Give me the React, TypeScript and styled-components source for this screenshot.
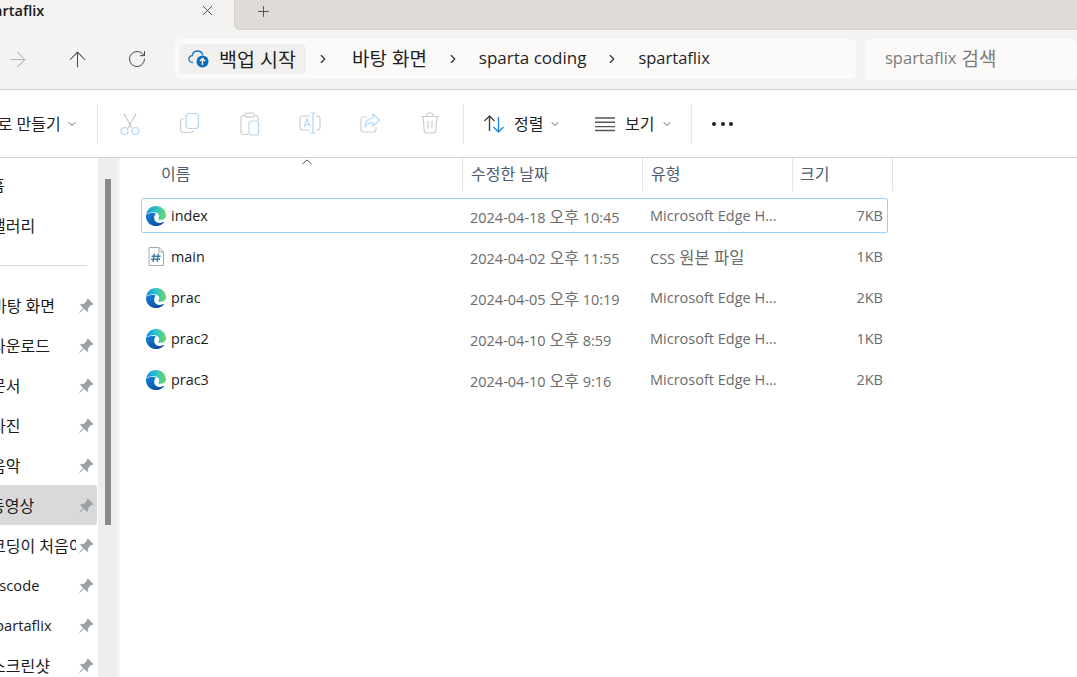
import styled, { createGlobalStyle } from 'styled-components'
import { ArrowRight, ArrowUp, ChevronDown, ChevronRight, Plus, RotateCw, X } from 'lucide-react'
import { BsPinAngleFill } from 'react-icons/bs'

const GlobalStyle = createGlobalStyle`
  html, body {
    margin: 0;
    padding: 0;
    height: 100%;
    overflow: hidden;
    background: #fff;
  }
  body {
    font-family: "Open Sans", "Noto Sans CJK KR", sans-serif;
  }
  * {
    box-sizing: border-box;
  }
`

const Window = styled.div`
  width: 100vw;
  height: 100vh;
  display: flex;
  flex-direction: column;
  overflow: hidden;
`

const TabStrip = styled.div`
  height: 30px;
  flex: none;
  display: flex;
  background: #f3f2f0;
`

const Tab = styled.div`
  width: 234px;
  display: flex;
  align-items: center;
  justify-content: space-between;
  padding-right: 18px;
  padding-bottom: 10px;
  color: #1a1a1a;
  font-size: 14.5px;
  font-weight: 600;
`

const TabTitle = styled.span`
  margin-left: -22px;
`

const TabRest = styled.div`
  flex: 1;
  display: flex;
  align-items: center;
  padding: 0 0 6px 20px;
  background: #dedbd6;
  border-left: 1px solid #d4d2cd;
  border-bottom: 1px solid #d4d2cd;
  border-bottom-left-radius: 6px;
  color: #555;
`

const AddressBar = styled.div`
  height: 60px;
  flex: none;
  display: flex;
  align-items: center;
  padding-bottom: 1px;
  background: #f4f3f1;
  border-bottom: 1px solid #d2d1ce;
`

const NavGroup = styled.div`
  display: flex;
  margin-left: -13px;
  margin-right: 8px;
`

const NavButton = styled.div<{ $disabled?: boolean }>`
  width: 60px;
  height: 26px;
  display: flex;
  align-items: center;
  justify-content: center;
  color: ${({ $disabled }) => ($disabled ? '#b5b5b5' : '#4a4a4a')};
`

const Breadcrumb = styled.div`
  width: 681px;
  height: 40px;
  display: flex;
  align-items: center;
  gap: 22px;
  padding-left: 4px;
  background: #fbfaf8;
  border-radius: 5px;
  color: #1f1f1f;
  font-size: 17px;
`

const BackupChip = styled.div`
  width: 127px;
  height: 30px;
  margin-right: -9px;
  display: flex;
  align-items: center;
  gap: 9px;
  padding: 0 0 2px 9px;
  background: #f1f0ee;
  border-radius: 5px;
  font-size: 19.5px;
  white-space: nowrap;
`

const Crumb = styled.span<{ $size?: number; $lead?: number }>`
  margin-bottom: 3px;
  margin-left: ${({ $lead }) => $lead ?? 0}px;
  font-size: ${({ $size }) => $size ?? 17}px;
  white-space: nowrap;
`

const CrumbArrow = styled(ChevronRight)`
  flex: none;
  width: 14px;
  height: 14px;
  margin: 0 -3px;
  color: #333;
`

const SearchBox = styled.div`
  flex: 1;
  height: 41px;
  margin-left: 9px;
  display: flex;
  align-items: center;
  gap: 5px;
  padding: 0 0 3px 20px;
  background: #fbfaf8;
  border-radius: 5px;
  color: #7a7a7a;
  font-size: 16.5px;
`

const Ko = styled.span<{ $size?: number }>`
  font-size: ${({ $size }) => $size ?? 16}px;
`

const Toolbar = styled.div`
  height: 68px;
  flex: none;
  display: flex;
  align-items: center;
  background: #fff;
  border-bottom: 1px solid #d4d2cd;
  color: #1f1f1f;
  font-size: 16px;
`

const NewButton = styled.div`
  width: 114px;
  margin-left: -17px;
  flex: none;
  display: flex;
  align-items: center;
  gap: 8px;
  white-space: nowrap;
`

const ToolLabel = styled.span`
  margin-bottom: 2px;
`

const Divider = styled.div`
  width: 1px;
  height: 40px;
  flex: none;
  background: #e6e6e6;
`

const IconGroup = styled.div`
  display: flex;
  margin: 0 3px 0 2px;
  opacity: 0.9;
`

const ActionIcon = styled.div`
  width: 60px;
  display: flex;
  justify-content: center;
`

const MenuButton = styled.div<{ $width: number; $pad: number; $gap: number }>`
  width: ${({ $width }) => $width}px;
  padding-left: ${({ $pad }) => $pad}px;
  display: flex;
  align-items: center;
  gap: ${({ $gap }) => $gap}px;
  white-space: nowrap;
`

const SmallChevron = styled(ChevronDown)`
  width: 12px;
  height: 12px;
  margin-left: -3px;
  color: #666;
`

const Dots = styled.div`
  display: flex;
  gap: 4.5px;
  margin-left: 20px;

  i {
    width: 4px;
    height: 4px;
    border-radius: 50%;
    background: #222;
  }
`

const Body = styled.div`
  flex: 1;
  min-height: 0;
  display: flex;
`

const Sidebar = styled.nav`
  width: 98px;
  flex: none;
  overflow: hidden;
  padding-top: 6px;
`

const NavItem = styled.div<{ $active?: boolean; $gap?: boolean }>`
  width: 97px;
  height: 40px;
  display: flex;
  align-items: center;
  margin-bottom: ${({ $gap }) => ($gap ? 1 : 0)}px;
  background: ${({ $active }) => ($active ? '#d9d9d9' : 'transparent')};
  border-radius: 0 3px 3px 0;
  color: #1a1a1a;
`

const NavLabel = styled.div`
  width: 76px;
  flex: none;
  overflow: hidden;
  white-space: nowrap;
`

const NavText = styled.span<{ $shift: number; $latin?: boolean }>`
  display: inline-block;
  margin-left: ${({ $shift }) => $shift}px;
  font-size: ${({ $latin }) => ($latin ? 14.7 : 16)}px;
`

const NavPin = styled(BsPinAngleFill)`
  width: 16px;
  height: 16px;
  margin: 1px 0 0 2px;
  color: #98a2a9;
`

const NavDivider = styled.div`
  width: 87px;
  height: 1px;
  margin: 20px 0 19px;
  background: #d9d9d9;
`

const ScrollTrack = styled.div`
  width: 20px;
  flex: none;
  padding: 21px 7px 0;
  background: #eeeeee;
`

const ScrollThumb = styled.div`
  width: 6px;
  height: 346px;
  background: #8a8a8a;
`

const Main = styled.main`
  flex: 1;
  padding-left: 21px;
  margin-left: 2px;
  box-shadow: -2px 0 0 #f6f6f6;
  background: #fff;
`

const HeaderRow = styled.div`
  width: 752px;
  height: 33px;
  margin-bottom: 7px;
  display: grid;
  grid-template-columns: 322px 180px 150px 100px;
  color: #4d5c70;
  font-size: 16px;
`

const HeaderCell = styled.div<{ $pad: number }>`
  position: relative;
  display: flex;
  align-items: center;
  padding: 0 0 3px ${({ $pad }) => $pad}px;
  border-right: 1px solid #e5e5e5;
`

const SortCaret = styled.svg`
  position: absolute;
  top: 1px;
  left: 161px;
`

const FileRow = styled.div<{ $selected?: boolean }>`
  width: 747px;
  height: 35px;
  margin-bottom: 6px;
  display: grid;
  grid-template-columns: 321px 180px 150px 94px;
  align-items: center;
  border: 1px solid ${({ $selected }) => ($selected ? '#99d1ff' : 'transparent')};
  border-radius: 2px;
  font-size: 14.5px;
  color: #6b6b6b;
`

const NameCell = styled.div`
  display: flex;
  align-items: center;
  gap: 5px;
  padding-left: 4px;
  font-size: 14.4px;
  color: #1a1a1a;
`

const IconSlot = styled.div`
  width: 20px;
  height: 20px;
  flex: none;
  display: flex;
  align-items: center;
  justify-content: center;
`

const DateCell = styled.div`
  padding-left: 7px;
  white-space: nowrap;
`

const TypeCell = styled.div`
  padding-left: 7px;
  white-space: nowrap;
`

const SizeCell = styled.div`
  padding-right: 4px;
  text-align: right;
`

const CloudIcon = () => (
  <svg width="22" height="22" viewBox="0 0 22 22" fill="none">
    <path d="M5 15.5C2.8 15.5 1 14 1 12c0-1.9 1.5-3.3 3.2-3.4C4.8 6 7 4 9.5 4c2.6 0 4.7 1.7 5.3 4" stroke="#1273c9" strokeWidth="1.3" />
    <circle cx="14.5" cy="14.5" r="6" fill="#0f6cbd" />
    <path d="M14.5 18v-6.2M12 14l2.5-2.5L17 14" stroke="#fff" strokeWidth="1.4" />
  </svg>
)

const CutIcon = () => (
  <svg width="22" height="24" viewBox="0 0 22 24" fill="none" strokeWidth="1.2">
    <path d="M5 1.5l7.8 14.5M17 1.5L9.2 16" stroke="#c4c4c4" />
    <circle cx="5.5" cy="19" r="3.5" stroke="#a9d3f5" />
    <circle cx="16.5" cy="19" r="3.5" stroke="#a9d3f5" />
  </svg>
)

const CopyIcon = () => (
  <svg width="22" height="22" viewBox="0 0 22 22" fill="none" strokeWidth="1.2">
    <path d="M4.5 6.5C2.8 7 1.5 8 1.5 10v7c0 2 1.5 3.5 3.5 3.5h6.5c1.5 0 2.7-.8 3.3-2" stroke="#c8c8c8" />
    <rect x="7" y="1.5" width="12.5" height="15" rx="3" stroke="#a9d3f5" />
  </svg>
)

const PasteIcon = () => (
  <svg width="20" height="24" viewBox="0 0 20 24" fill="none" strokeWidth="1.2">
    <path d="M5 3.5H3.5A2.5 2.5 0 0 0 1 6v14a2.5 2.5 0 0 0 2.5 2.5H8M14 3.5h1.5A2.5 2.5 0 0 1 18 6v2" stroke="#c8c8c8" />
    <rect x="5" y="1.2" width="9" height="4" rx="1.6" stroke="#c8c8c8" />
    <rect x="9" y="9" width="9.5" height="14" rx="2.5" stroke="#a9d3f5" />
  </svg>
)

const RenameIcon = () => (
  <svg width="22" height="22" viewBox="0 0 22 22" fill="none" strokeWidth="1.2">
    <path d="M11 4H4a3 3 0 0 0-3 3v8a3 3 0 0 0 3 3h7M17 4h1.2a3 3 0 0 1 2.8 3v8a3 3 0 0 1-2.8 3H17" stroke="#c8c8c8" />
    <path d="M14 1v20M11.5 1h5M11.5 21h5" stroke="#a9d3f5" />
    <path d="M5 15l3.2-8 3 8M6 12.5h4.4" stroke="#a9d3f5" />
  </svg>
)

const ShareIcon = () => (
  <svg width="22" height="22" viewBox="0 0 22 22" fill="none" strokeWidth="1.2">
    <path d="M8 5H5a3 3 0 0 0-3 3v9a3 3 0 0 0 3 3h9a3 3 0 0 0 3-3v-2" stroke="#c8c8c8" />
    <path d="M14 2l6.5 6L14 14v-3.5C10 10.5 7.5 12 6 15c0-5 3-8.5 8-9z" stroke="#a9d3f5" strokeLinejoin="round" />
  </svg>
)

const TrashIcon = () => (
  <svg width="20" height="22" viewBox="0 0 20 22" fill="none" stroke="#c8c8c8" strokeWidth="1.2">
    <path d="M1 4.5h18M7 4.5V3a2 2 0 0 1 2-2h2a2 2 0 0 1 2 2v1.5" />
    <path d="M3 4.5l1.2 14a2.5 2.5 0 0 0 2.5 2.5h6.6a2.5 2.5 0 0 0 2.5-2.5l1.2-14" />
    <path d="M8 9v7.5M12 9v7.5" />
  </svg>
)

const SortIcon = () => (
  <svg width="22" height="20" viewBox="0 0 22 20" fill="none" strokeWidth="1.4">
    <path d="M6.5 17V2M1.5 7l5-5 5 5" stroke="#444" />
    <path d="M15.5 3v15M10.5 13l5 5 5-5" stroke="#1e88e5" />
  </svg>
)

const ViewIcon = () => (
  <svg width="20" height="16" viewBox="0 0 20 16" fill="none" stroke="#555" strokeWidth="1.4">
    <path d="M0 2h20M0 6.3h20M0 10.6h20M0 14.5h20" />
  </svg>
)

const EdgeIcon = () => (
  <svg width="22" height="22" viewBox="0 0 24 24" style={{ flex: 'none' }}>
    <defs>
      <linearGradient id="edgeTop" x1="0" y1="0.5" x2="1" y2="0.5">
        <stop offset="0" stopColor="#0f8fdc" />
        <stop offset="0.5" stopColor="#2cc4d0" />
        <stop offset="1" stopColor="#72d85a" />
      </linearGradient>
      <linearGradient id="edgeBottom" x1="0.1" y1="0" x2="0.8" y2="1">
        <stop offset="0" stopColor="#1580d6" />
        <stop offset="1" stopColor="#0b4aa0" />
      </linearGradient>
    </defs>
    <path d="M1 12C1.5 5.5 6 1 12 1c6.5 0 11 5 11 10.5 0 3-2.5 4.5-5.5 4.500-2 0-3-.5-3-1s1-1 1-2.800c0-2.500-2.500-4-5.500-4.200C5 8 1 9 1 12z" fill="url(#edgeTop)" />
    <path d="M1 12c0 6.500 5 11 11 11 3 0 6-1 8.500-3.700.4-.6 0-1-.5-.7-1.500.7-3 1-4.500 1-3.500 0-5.500-2.800-5.500-5.600 0-2 .8-3.700 2-4.800C7 8 1 9 1 12z" fill="url(#edgeBottom)" />
  </svg>
)

const CssIcon = () => (
  <svg width="16" height="19" viewBox="0 0 16 19" fill="none">
    <path d="M1 .5h10l4.500 4.500v13.500H1z" fill="#fff" stroke="#a8a8a8" />
    <path d="M11 .5V5h4.500" stroke="#a8a8a8" />
    <path d="M6.300 6.500l-1.300 8.500M10.500 6.500l-1.300 8.500M3.500 9.300h9M3 12.300h9" stroke="#3f7ca3" strokeWidth="1.400" />
  </svg>
)

const navTop = [
  { label: '홈', shift: -10 },
  { label: '갤러리', shift: -9 },
]

const navPinned = [
  { label: '바탕 화면', shift: -8 },
  { label: '다운로드', shift: -9 },
  { label: '문서', shift: -9 },
  { label: '사진', shift: -9 },
  { label: '음악', shift: -9 },
  { label: '동영상', shift: -10, active: true },
  { label: '코딩이 처음이라면', shift: -9 },
  { label: 'vscode', shift: -8, latin: true },
  { label: 'spartaflix', shift: -12, latin: true },
  { label: '스크린샷', shift: -9 },
]

const files = [
  { name: 'index', day: '2024-04-18', time: '10:45', type: 'Microsoft Edge H...', size: '7KB', css: false },
  { name: 'main', day: '2024-04-02', time: '11:55', type: 'CSS', size: '1KB', css: true },
  { name: 'prac', day: '2024-04-05', time: '10:19', type: 'Microsoft Edge H...', size: '2KB', css: false },
  { name: 'prac2', day: '2024-04-10', time: '8:59', type: 'Microsoft Edge H...', size: '1KB', css: false },
  { name: 'prac3', day: '2024-04-10', time: '9:16', type: 'Microsoft Edge H...', size: '2KB', css: false },
]

export default function App() {
  return (
    <Window>
      <GlobalStyle />
      <TabStrip>
        <Tab>
          <TabTitle>spartaflix</TabTitle>
          <X size={17} strokeWidth={1.2} color="#333" />
        </Tab>
        <TabRest>
          <Plus size={17} strokeWidth={1.4} />
        </TabRest>
      </TabStrip>

      <AddressBar>
        <NavGroup>
          <NavButton $disabled><ArrowRight size={25} strokeWidth={1} /></NavButton>
          <NavButton><ArrowUp size={25} strokeWidth={1} /></NavButton>
          <NavButton><RotateCw size={20} strokeWidth={1.2} /></NavButton>
        </NavGroup>
        <Breadcrumb>
          <BackupChip><CloudIcon />백업 시작</BackupChip>
          <CrumbArrow />
          <Crumb $size={19} $lead={3}>바탕 화면</Crumb>
          <CrumbArrow />
          <Crumb>sparta coding</Crumb>
          <CrumbArrow />
          <Crumb $size={16.5}>spartaflix</Crumb>
        </Breadcrumb>
        <SearchBox>spartaflix <Ko $size={19}>검색</Ko></SearchBox>
      </AddressBar>

      <Toolbar>
        <NewButton><ToolLabel>새로 만들기</ToolLabel><SmallChevron /></NewButton>
        <Divider />
        <IconGroup>
          <ActionIcon><CutIcon /></ActionIcon>
          <ActionIcon><CopyIcon /></ActionIcon>
          <ActionIcon><PasteIcon /></ActionIcon>
          <ActionIcon><RenameIcon /></ActionIcon>
          <ActionIcon><ShareIcon /></ActionIcon>
          <ActionIcon><TrashIcon /></ActionIcon>
        </IconGroup>
        <Divider />
        <MenuButton $width={110} $pad={19} $gap={9}><SortIcon /><ToolLabel>정렬</ToolLabel><SmallChevron /></MenuButton>
        <MenuButton $width={117} $pad={21} $gap={10}><ViewIcon /><ToolLabel>보기</ToolLabel><SmallChevron /></MenuButton>
        <Divider />
        <Dots><i /><i /><i /></Dots>
      </Toolbar>

      <Body>
        <Sidebar>
          {navTop.map((item, i) => (
            <NavItem key={item.label} $gap={i === 0}>
              <NavLabel><NavText $shift={item.shift}>{item.label}</NavText></NavLabel>
            </NavItem>
          ))}
          <NavDivider />
          {navPinned.map((item) => (
            <NavItem key={item.label} $active={item.active}>
              <NavLabel><NavText $shift={item.shift} $latin={item.latin}>{item.label}</NavText></NavLabel>
              <NavPin />
            </NavItem>
          ))}
        </Sidebar>
        <ScrollTrack><ScrollThumb /></ScrollTrack>
        <Main>
          <HeaderRow>
            <HeaderCell $pad={20}>
              이름
              <SortCaret width="10" height="6" viewBox="0 0 10 6" fill="none" stroke="#555">
                <path d="M.5 5L5 1l4.500 4" />
              </SortCaret>
            </HeaderCell>
            <HeaderCell $pad={8}>수정한 날짜</HeaderCell>
            <HeaderCell $pad={8}>유형</HeaderCell>
            <HeaderCell $pad={7}>크기</HeaderCell>
          </HeaderRow>
          {files.map((f, i) => (
            <FileRow key={f.name} $selected={i === 0}>
              <NameCell>
                <IconSlot>{f.css ? <CssIcon /> : <EdgeIcon />}</IconSlot>
                {f.name}
              </NameCell>
              <DateCell>{f.day} <Ko>오후</Ko> {f.time}</DateCell>
              <TypeCell>{f.type}{f.css && <Ko $size={16.5}> 원본 파일</Ko>}</TypeCell>
              <SizeCell>{f.size}</SizeCell>
            </FileRow>
          ))}
        </Main>
      </Body>
    </Window>
  )
}
